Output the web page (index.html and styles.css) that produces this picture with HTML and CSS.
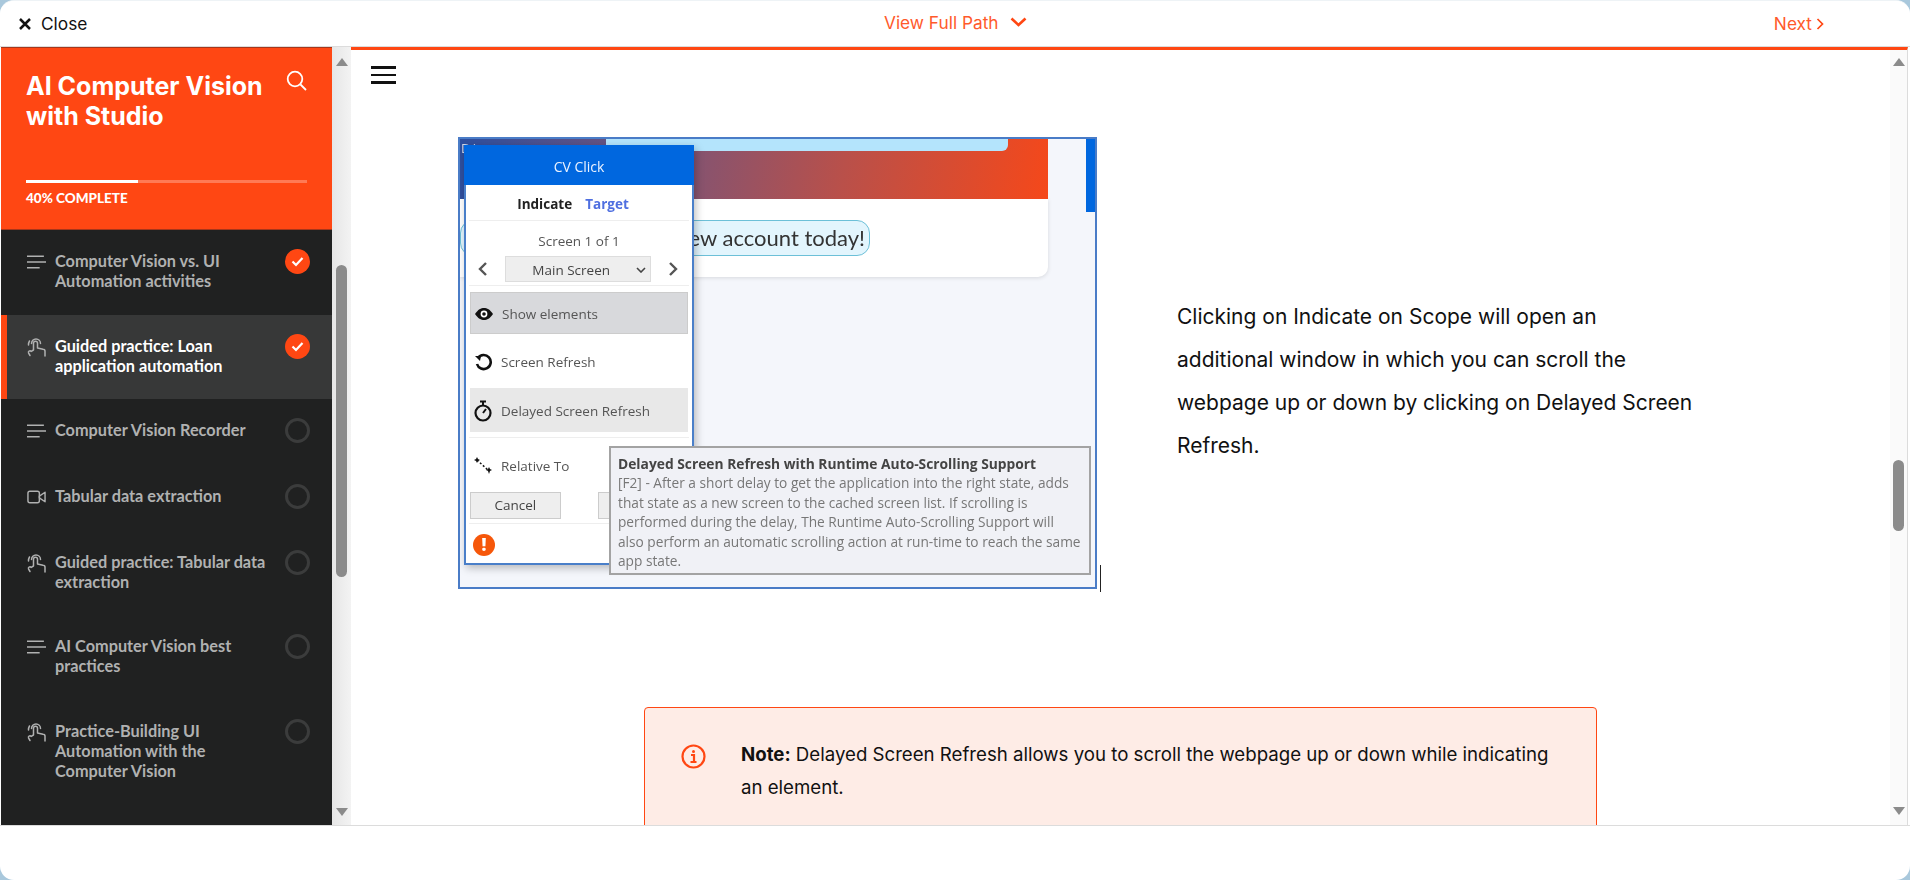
FILE: index.html
```html
<!DOCTYPE html>
<html lang="en">
<head>
    <meta charset="UTF-8">
    <meta name="viewport" content="width=device-width, initial-scale=1.0">
    <title>AI Computer Vision with Studio</title>
    <link rel="stylesheet" href="styles.css">
</head>
<body>
    <svg class="icon-defs" width="0" height="0">
        <symbol id="i-lines" viewBox="0 0 18 18">
            <path d="M0 3.5H16M0 9H18M0 14.5H12" fill="none" stroke="currentColor" stroke-width="1.5"/>
        </symbol>
        <symbol id="i-touch" viewBox="0 0 19 20">
            <path d="M4.500 6.500a4.500 4.500 0 0 1 9 0M6.500 13V6.200a2 2 0 0 1 4 0V11l5.500 1.200a2 2 0 0 1 2 2V19M6.500 13l-2.300 1.400c-1.300-1.400-3.400 0-2.600 1.700L3 18.500M1.500 8a7 7 0 0 1 1-4" fill="none" stroke="currentColor" stroke-width="1.500" stroke-linecap="round" stroke-linejoin="round"/>
        </symbol>
        <symbol id="i-video" viewBox="0 0 20 14">
            <rect x="1" y="1" width="12" height="12" rx="2" fill="none" stroke="currentColor" stroke-width="1.5"/>
            <path d="M19 2v10l-6-4V6z" fill="none" stroke="currentColor" stroke-width="1.5" stroke-linejoin="round"/>
        </symbol>
    </svg>

    <div class="window">
        <header class="topbar">
            <a class="close">
                <svg width="12" height="12" viewBox="0 0 12 12"><path d="M1 1L11 11M11 1L1 11" stroke="#111" stroke-width="2.500"/></svg>
                Close
            </a>
            <a class="full-path">
                View Full Path
                <svg width="17" height="10" viewBox="0 0 17 10"><path d="M1.500 1.500L8.500 8L15.500 1.500" fill="none" stroke="#ff4713" stroke-width="2.600"/></svg>
            </a>
            <a class="next">
                Next
                <svg width="8" height="12" viewBox="0 0 8 12"><path d="M1.500 1L6.500 6L1.500 11" fill="none" stroke="#ff4713" stroke-width="1.700"/></svg>
            </a>
        </header>

        <div class="body-row">
            <aside class="sidebar">
                <div class="course-head">
                    <div class="course-title-row">
                        <h1 class="course-title">AI Computer Vision with Studio</h1>
                        <svg class="search" width="21" height="21" viewBox="0 0 21 21"><circle cx="9" cy="9" r="7.300" fill="none" stroke="#fff" stroke-width="1.800"/><path d="M14.500 14.500L20 20" stroke="#fff" stroke-width="1.800"/></svg>
                    </div>
                    <div class="progress"><div class="progress-fill"></div></div>
                    <div class="progress-label">40% COMPLETE</div>
                </div>
                <ul class="lessons">
                    <li class="lesson">
                        <svg class="lesson-icon"><use href="#i-lines"/></svg>
                        <span class="lesson-name">Computer Vision vs. UI Automation activities</span>
                        <span class="status done"><svg width="13" height="11" viewBox="0 0 13 11"><path d="M1.500 5.500L5 9L11.500 2" fill="none" stroke="#fff" stroke-width="2.200"/></svg></span>
                    </li>
                    <li class="lesson active">
                        <svg class="lesson-icon"><use href="#i-touch"/></svg>
                        <span class="lesson-name">Guided practice: Loan application automation</span>
                        <span class="status done"><svg width="13" height="11" viewBox="0 0 13 11"><path d="M1.500 5.500L5 9L11.500 2" fill="none" stroke="#fff" stroke-width="2.200"/></svg></span>
                    </li>
                    <li class="lesson">
                        <svg class="lesson-icon"><use href="#i-lines"/></svg>
                        <span class="lesson-name">Computer Vision Recorder</span>
                        <span class="status"></span>
                    </li>
                    <li class="lesson">
                        <svg class="lesson-icon"><use href="#i-video"/></svg>
                        <span class="lesson-name">Tabular data extraction</span>
                        <span class="status"></span>
                    </li>
                    <li class="lesson">
                        <svg class="lesson-icon"><use href="#i-touch"/></svg>
                        <span class="lesson-name">Guided practice: Tabular data extraction</span>
                        <span class="status"></span>
                    </li>
                    <li class="lesson">
                        <svg class="lesson-icon"><use href="#i-lines"/></svg>
                        <span class="lesson-name">AI Computer Vision best practices</span>
                        <span class="status"></span>
                    </li>
                    <li class="lesson">
                        <svg class="lesson-icon"><use href="#i-touch"/></svg>
                        <span class="lesson-name">Practice-Building UI Automation with the Computer Vision</span>
                        <span class="status"></span>
                    </li>
                </ul>
            </aside>
            <div class="scroll-track side-track">
                <span class="arrow-up"></span>
                <span class="thumb side-thumb"></span>
                <span class="arrow-down"></span>
            </div>

            <main class="content">
                <div class="hamburger"><span></span><span></span><span></span></div>
                <section class="split">
                    <div class="shot">
                        <div class="shot-banner"><span class="shot-corner">D/:</span><span class="shot-bar"></span></div>
                        <span class="shot-strip"></span>
                        <div class="shot-card">
                            <span class="shot-pill">ew account today!</span>
                        </div>

                        <div class="dialog">
                            <div class="dialog-head">CV Click</div>
                            <div class="dialog-tabs"><b>Indicate</b><b class="tab-target">Target</b></div>
                            <div class="dialog-screens">Screen 1 of 1</div>
                            <div class="dialog-select">
                                <svg width="10" height="16" viewBox="0 0 10 16"><path d="M8 2L2 8L8 14" fill="none" stroke="#555" stroke-width="2.400"/></svg>
                                <span class="select-box">Main Screen
                                    <svg width="10" height="6" viewBox="0 0 10 6"><path d="M1 1L5 5L9 1" fill="none" stroke="#444" stroke-width="1.600"/></svg>
                                </span>
                                <svg width="10" height="16" viewBox="0 0 10 16"><path d="M2 2L8 8L2 14" fill="none" stroke="#555" stroke-width="2.400"/></svg>
                            </div>
                            <div class="dialog-action shown">
                                <svg width="20" height="14" viewBox="0 0 20 14"><path d="M1 7C4 2.500 7 1 10 1s6 1.500 9 6c-3 4.500-6 6-9 6s-6-1.500-9-6z" fill="#111"/><circle cx="10" cy="7" r="3.400" fill="#fff"/><circle cx="10" cy="7" r="1.800" fill="#111"/></svg>
                                Show elements
                            </div>
                            <div class="dialog-action refresh">
                                <svg width="20" height="18" viewBox="0 0 20 18"><path d="M5 5a7 7 0 1 1-1 6" fill="none" stroke="#111" stroke-width="2.600"/><path d="M2 3l6 0l-1 5z" fill="#111"/></svg>
                                Screen Refresh
                            </div>
                            <div class="dialog-action hovered">
                                <svg width="20" height="22" viewBox="0 0 20 22"><circle cx="10" cy="13" r="7.500" fill="none" stroke="#111" stroke-width="2.200"/><path d="M7 1.500h6M10 2v3M10 13l3-4" stroke="#111" stroke-width="2"/></svg>
                                Delayed Screen Refresh
                            </div>
                            <div class="dialog-action relative">
                                <svg width="20" height="18" viewBox="0 0 20 18"><path d="M4 3L16 14" stroke="#111" stroke-width="1.500" stroke-dasharray="2 2"/><path d="M4 0l1 2l2 1l-2 1l-1 2l-1-2l-2-1l2-1zM16 10l1 2l2 1l-2 1l-1 3l-1-3l-2-1l2-1z" fill="#111"/></svg>
                                Relative To
                            </div>
                            <div class="dialog-buttons"><span class="dialog-btn"></span><span class="dialog-btn">Cancel</span></div>
                            <div class="dialog-warn">!</div>
                        </div>

                        <div class="shot-tip">
                            <b>Delayed Screen Refresh with Runtime Auto-Scrolling Support</b><br>
                            [F2] - After a short delay to get the application into the right state, adds<br>
                            that state as a new screen to the cached screen list. If scrolling is<br>
                            performed during the delay, The Runtime Auto-Scrolling Support will<br>
                            also perform an automatic scrolling action at run-time to reach the same<br>
                            app state.
                        </div>
                    </div>
                    <span class="caret"></span>
                    <p class="split-text">Clicking on Indicate on Scope will open an additional window in which you can scroll the webpage up or down by clicking on Delayed Screen Refresh.</p>
                </section>

                <div class="note">
                    <svg class="note-icon" width="25" height="25" viewBox="0 0 25 25"><circle cx="12.500" cy="12.500" r="11" fill="none" stroke="#ff4713" stroke-width="2.200"/><circle cx="12.500" cy="7.500" r="1.500" fill="#ff4713"/><path d="M10 11h3v6.500M9.500 18h6" fill="none" stroke="#ff4713" stroke-width="2.200"/></svg>
                    <p class="note-text"><b>Note:</b> Delayed Screen Refresh allows you to scroll the webpage up or down while indicating an element.</p>
                </div>
            </main>
            <div class="scroll-track main-track">
                <span class="arrow-up"></span>
                <span class="thumb main-thumb"></span>
                <span class="arrow-down"></span>
            </div>
        </div>
    </div>
</body>
</html>
```

FILE: styles.css
```css
/* General Styles */
* {
    box-sizing: border-box;
}
html, body {
    height: 100%;
}
body {
    margin: 0;
    overflow: hidden;
    background-color: #a9c8dc;
    font-family: Inter, "Liberation Sans", sans-serif;
    color: #111;
}
.icon-defs {
    position: absolute;
}
.window {
    height: 880px;
    border-radius: 14px;
    background-color: #fff;
    border-top: 1px solid #eef3f6;
    overflow: hidden;
}

/* Top bar */
.topbar {
    height: 46px;
    display: flex;
    align-items: center;
    padding: 0 86px 0 19px;
    background-color: #fff;
    border-bottom: 1px solid #dcdcdc;
    font-size: 17.300px;
}
.close {
    display: flex;
    align-items: center;
    gap: 10px;
    width: 865px;
}
.full-path {
    display: flex;
    align-items: center;
    gap: 11px;
    color: #ff5a2b;
    margin-top: -3px;
}
.next {
    display: flex;
    align-items: center;
    gap: 4px;
    margin-left: auto;
    color: #ff5a2b;
}

.body-row {
    display: flex;
    height: 779px;
    padding: 0 2px 0 1px;
    border-bottom: 1px solid #dcdcdc;
}

/* Sidebar */
.sidebar {
    width: 331px;
    flex-shrink: 0;
    background-color: #202121;
    overflow: hidden;
}
.course-head {
    height: 183px;
    padding: 23px 25px 0;
    background-color: #ff4713;
    border-top: 1px solid #a8361a;
    border-bottom: 1px solid #a8361a;
}
.course-title-row {
    display: flex;
    justify-content: space-between;
    height: 109px;
}
.course-title {
    margin: 0;
    width: 245px;
    font-size: 25px;
    font-weight: 700;
    line-height: 30px;
    color: #fff;
}
.search {
    margin-top: -1px;
}
.progress {
    height: 3px;
    background-color: #ff7a55;
}
.progress-fill {
    width: 40%;
    height: 3px;
    background-color: #fff;
}
.progress-label {
    margin-top: 7px;
    font-family: Lato, sans-serif;
    font-size: 13.500px;
    font-weight: 900;
    color: #fff;
}
.lessons {
    list-style: none;
    margin: 0;
    padding: 0;
}
.lesson {
    display: flex;
    align-items: flex-start;
    padding: 21px 22px 23.700px 26px;
    color: #b0b1b1;
}
.lesson.active {
    padding-left: 20px;
    border-left: 6px solid #ff4713;
    background-color: #373838;
    color: #fff;
}
.lesson-icon {
    width: 19px;
    height: 20px;
    flex-shrink: 0;
    margin: 1px 9px 0 0;
    color: #b0b1b1;
}
.lesson-name {
    flex: 1;
    font-family: Lato, sans-serif;
    font-size: 16.300px;
    font-weight: 700;
    line-height: 20px;
}
.status {
    width: 25px;
    height: 25px;
    flex-shrink: 0;
    margin: -2px 0 -3px 8px;
    border: 3px solid #3b3c3c;
    border-radius: 50%;
}
.status.done {
    display: flex;
    align-items: center;
    justify-content: center;
    border: 0;
    background-color: #ff4713;
}

/* Scrollbars */
.scroll-track {
    display: flex;
    flex-direction: column;
    align-items: center;
    flex-shrink: 0;
}
.side-track {
    width: 19px;
    padding: 11px 0 9px;
    background: linear-gradient(to right, #e6e6e6, #f3f3f3);
}
.main-track {
    width: 18px;
    padding: 8px 0 10px;
    background-color: #fafafa;
    border-top: 3px solid #ff4713;
    border-right: 1px solid #dcdcdc;
}
.arrow-up,
.arrow-down {
    width: 0;
    height: 0;
    border-left: 6px solid transparent;
    border-right: 6px solid transparent;
}
.arrow-up {
    border-bottom: 8px solid #8b8b8b;
}
.arrow-down {
    margin-top: auto;
    border-top: 8px solid #8b8b8b;
}
.thumb {
    border-radius: 6px;
    background-color: #8b8b8b;
}
.side-thumb {
    width: 11px;
    height: 312px;
    margin-top: 199px;
}
.main-thumb {
    width: 11px;
    height: 71px;
    margin-top: 394px;
}

/* Content */
.content {
    flex: 1;
    min-width: 0;
    overflow: hidden;
    background-color: #fff;
    border-top: 3px solid #ff4713;
    padding-top: 16px;
}
.hamburger {
    display: flex;
    flex-direction: column;
    gap: 5px;
    width: 25px;
    margin-left: 20px;
}
.hamburger span {
    height: 2.500px;
    background-color: #111;
}
.split {
    display: flex;
    align-items: flex-start;
    margin-top: 53px;
    padding-left: 107px;
}

/* Picture of the indicate window */
.shot {
    position: relative;
    width: 639px;
    height: 452px;
    flex-shrink: 0;
    overflow: hidden;
    border: 2px solid #4a7cc7;
    background-color: #f4f6fb;
    font-family: "Open Sans", sans-serif;
    filter: blur(0.3px);
}
.shot-banner {
    position: relative;
    height: 60px;
    width: 588px;
    background: linear-gradient(100deg, #2d4f9f 0%, #7c5477 35%, #b9504a 65%, #f5481a 100%);
}
.shot-corner {
    position: absolute;
    left: 1px;
    top: 0;
    font-size: 13px;
    color: #cfd8ea;
}
.shot-bar {
    position: absolute;
    left: 146px;
    top: 0;
    width: 402px;
    height: 12px;
    border-radius: 0 0 6px 0;
    background-color: #b4e4fc;
}
.shot-strip {
    position: absolute;
    right: 0;
    top: 0;
    width: 9px;
    height: 73px;
    background-color: #0067df;
}
.shot-card {
    width: 588px;
    height: 78px;
    padding-top: 21px;
    border-radius: 0 0 10px 0;
    background-color: #fff;
    box-shadow: 0 1px 4px rgba(0, 0, 0, 0.12);
}
.shot-pill {
    display: block;
    width: 410px;
    height: 36px;
    padding-right: 4px;
    text-align: right;
    font-family: Lato, sans-serif;
    font-size: 22px;
    line-height: 33px;
    color: #333;
    border: 1.500px solid #6cc0d8;
    border-radius: 13px;
    background-color: #e2f5fd;
}
.dialog {
    position: absolute;
    left: 4px;
    top: 6px;
    width: 230px;
    height: 420px;
    border: 2px solid #4a7fc9;
    border-top: 0;
    background-color: #fff;
    box-shadow: 2px 3px 8px rgba(0, 0, 0, 0.25);
    font-size: 13.500px;
    color: #555;
}
.dialog-head {
    height: 40px;
    margin: 0 -2px;
    line-height: 43px;
    text-align: center;
    color: #eaf2ff;
    font-size: 14px;
    background-color: #0067df;
}
.dialog-tabs {
    display: flex;
    justify-content: center;
    gap: 13px;
    height: 36px;
    margin: 0 3px;
    padding-right: 12px;
    line-height: 39px;
    font-size: 13.500px;
    color: #222;
    border-bottom: 1px solid #eee;
}
.tab-target {
    color: #4f6fe0;
}
.dialog-screens {
    margin-top: 10px;
    line-height: 20px;
    text-align: center;
}
.dialog-select {
    display: flex;
    align-items: center;
    justify-content: space-between;
    height: 35px;
    margin: 0 3px;
    padding: 6px 11px 3px 9px;
    border-bottom: 1px solid #eee;
}
.select-box {
    display: flex;
    align-items: center;
    justify-content: flex-end;
    gap: 26px;
    width: 146px;
    height: 26px;
    padding: 2px 4px 0 0;
    color: #444;
    background-color: #eee;
    border: 1px solid #ddd;
}
.dialog-action {
    display: flex;
    align-items: center;
    gap: 8px;
    height: 43px;
    margin: 6px 4px 0;
    padding: 2px 0 0 3px;
}
.dialog-action.shown {
    height: 42px;
    background-color: #d8d9dc;
    border: 1px solid #ccc;
}
.dialog-action.hovered {
    height: 44px;
    margin-top: 5px;
    background-color: #e8e8e8;
}
.dialog-action.relative {
    height: 51px;
    margin: 5px 3px 0;
    padding: 6px 0 0 4px;
    border-top: 1px solid #eee;
}
.dialog-buttons {
    display: flex;
    flex-direction: row-reverse;
    justify-content: flex-end;
    gap: 37px;
    margin: 4px 3px 0;
    padding: 0 1px 4px;
    border-bottom: 1px solid #eee;
}
.dialog-btn {
    display: block;
    width: 91px;
    height: 27px;
    line-height: 25px;
    text-align: center;
    color: #444;
    background-color: #eee;
    border: 1px solid #ccc;
}
.dialog-warn {
    width: 22px;
    height: 22px;
    margin: 10px 0 0 7px;
    border-radius: 50%;
    background-color: #f6570a;
    color: #fff;
    font-weight: 800;
    font-size: 17px;
    line-height: 22px;
    text-align: center;
}
.shot-tip {
    position: absolute;
    left: 149px;
    top: 307px;
    width: 482px;
    height: 129px;
    padding: 6px 2px 0 7px;
    font-size: 13.700px;
    line-height: 19.500px;
    white-space: nowrap;
    color: #777;
    background-color: #f0f1f6;
    border: 2px solid #a3a3a3;
}
.shot-tip b {
    font-size: 13.800px;
    color: #444;
}
.caret {
    align-self: flex-start;
    width: 1px;
    height: 27px;
    margin: 428px 0 0 3px;
    background-color: #222;
}
.split-text {
    width: 520px;
    margin: 158px 0 0 76px;
    font-size: 21px;
    line-height: 43px;
    color: #111;
}
.note {
    display: flex;
    align-items: flex-start;
    gap: 35px;
    width: 953px;
    height: 180px;
    margin: 115px 0 0 293px;
    padding: 30px 30px;
    background-color: #feece6;
    border: 1px solid #ff4713;
    border-radius: 4px;
}
.note-icon {
    flex-shrink: 0;
    margin: 6px 0 0 6px;
}
.note-text {
    margin: 0;
    font-size: 18.650px;
    line-height: 33px;
    color: #111;
}
```
